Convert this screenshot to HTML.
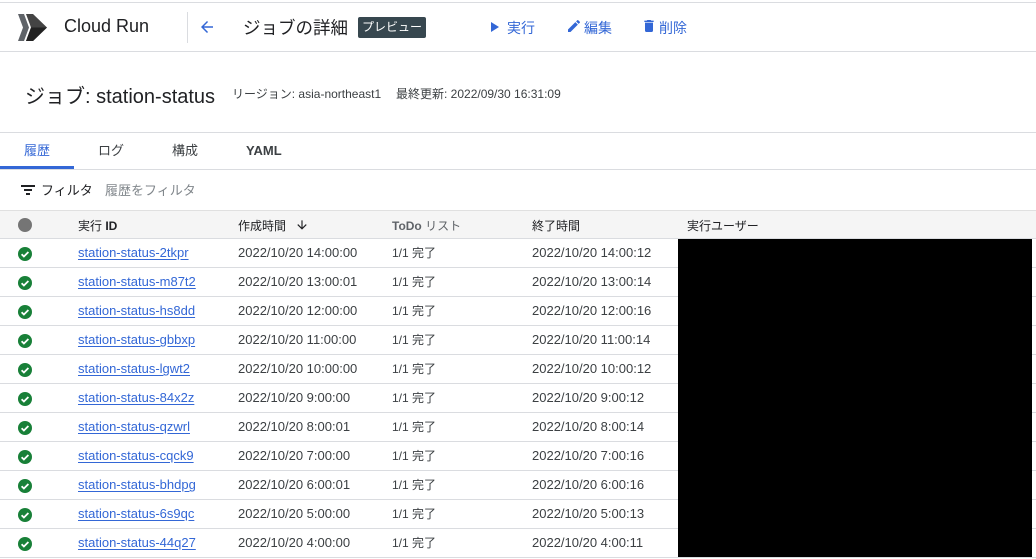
<!DOCTYPE html>
<html><head><meta charset="utf-8"><style>
*{margin:0;padding:0;box-sizing:border-box}
body{width:1036px;height:559px;overflow:hidden;background:#fff;font-family:"Liberation Sans","Noto Sans CJK JP",sans-serif;color:#202124;position:relative}
.a{position:absolute;white-space:nowrap}
.hl{position:absolute;left:0;width:1036px;height:1px;background:#dadce0}
.blue{color:#3367d6}
.row{position:absolute;left:0;width:1036px;height:29px;border-bottom:1px solid #dadce0;font-size:13px;color:#3c4043}
.row span{position:absolute;top:0;line-height:28px}
.lk{color:#3367d6;text-decoration:underline;text-underline-offset:2px}
</style></head><body>
<div class="hl" style="top:2px"></div>
<svg class="a" style="left:17px;top:13px" width="30" height="30" viewBox="0 0 30 30">
<polygon points="1,1 7,1 12,14.5 7,28 1,28 6,14.5" fill="#5f6368"/>
<polygon points="9,1 16,1 30,14.5 16,28 9,28 14,14.5" fill="#444"/>
<polygon points="14,14.5 30,14.5 16,28 9,28" fill="#222"/>
</svg>
<div class="a" style="left:64px;top:16px;font-size:18px;color:#202124">Cloud Run</div>
<div class="a" style="left:187px;top:12px;width:1px;height:31px;background:#dadce0"></div>
<svg class="a" style="left:198px;top:18px" width="18" height="18" viewBox="0 0 24 24"><path d="M20 11H7.8l5.6-5.6L12 4l-8 8 8 8 1.4-1.4L7.8 13H20z" fill="#3367d6"/></svg>
<div class="a" style="left:243px;top:15px;font-size:17.5px;color:#202124">ジョブの詳細</div>
<div class="a" style="left:358px;top:17px;width:68px;height:21px;background:#37474f;border-radius:2px;color:#fff;font-size:12px;line-height:21px;text-align:center">プレビュー</div>
<svg class="a" style="left:490px;top:21px" width="10" height="12" viewBox="0 0 10 12"><polygon points="1,1 9,6 1,11" fill="#3367d6"/></svg>
<div class="a blue" style="left:507px;top:18px;font-size:14px">実行</div>
<svg class="a" style="left:566px;top:18px" width="16" height="16" viewBox="0 0 24 24"><path d="M3 17.25V21h3.75L17.8 9.94l-3.750-3.75L3 17.25zM20.7 7.04a1 1 0 000-1.41l-2.34-2.34a1 1 0 00-1.41 0l-1.83 1.83 3.75 3.75 1.83-1.83z" fill="#3367d6"/></svg>
<div class="a blue" style="left:584px;top:18px;font-size:14px">編集</div>
<svg class="a" style="left:641px;top:17px" width="16" height="18" viewBox="0 0 24 24"><path d="M6 19c0 1.1.9 2 2 2h8c1.1 0 2-.9 2-2V7H6v12zM19 4h-3.5l-1-1h-5l-1 1H5v2h14V4z" fill="#3367d6"/></svg>
<div class="a blue" style="left:659px;top:18px;font-size:14px">削除</div>
<div class="hl" style="top:51px"></div>
<div class="a" style="left:25px;top:80px;font-size:20px;color:#202124">ジョブ: station-status</div>
<div class="a" style="left:232px;top:85px;font-size:12px;color:#3c4043">リージョン: asia-northeast1</div>
<div class="a" style="left:396px;top:85px;font-size:12px;color:#3c4043">最終更新: 2022/09/30 16:31:09</div>
<div class="hl" style="top:132px"></div>
<div class="a blue" style="left:24px;top:140px;font-size:13px">履歴</div>
<div class="a" style="left:98px;top:140px;font-size:13px;color:#3c4043">ログ</div>
<div class="a" style="left:172px;top:140px;font-size:13px;color:#3c4043">構成</div>
<div class="a" style="left:246px;top:143px;font-size:13px;color:#3c4043;font-weight:bold">YAML</div>
<div class="a" style="left:0;top:166px;width:74px;height:3px;background:#3367d6"></div>
<div class="hl" style="top:169px"></div>
<svg class="a" style="left:21px;top:183px" width="14" height="12" viewBox="0 0 14 12"><rect x="0" y="2" width="14" height="2" fill="#202124"/><rect x="3" y="6" width="8" height="2" fill="#202124"/><rect x="5" y="10" width="4" height="2" fill="#202124"/></svg>
<div class="a" style="left:41px;top:180px;font-size:13px;color:#202124">フィルタ</div>
<div class="a" style="left:105px;top:180px;font-size:13px;color:#80868b">履歴をフィルタ</div>
<div class="a" style="left:0;top:210px;width:1036px;height:29px;background:#f5f5f5;border-top:1px solid #e0e0e0;border-bottom:1px solid #dadce0"></div>
<div class="a" style="left:18px;top:218px;width:14px;height:14px;border-radius:50%;background:#757575"></div>
<div class="a" style="left:78px;top:217px;font-size:12px;color:#202124">実行 <b>ID</b></div>
<div class="a" style="left:238px;top:217px;font-size:12px;color:#202124">作成時間</div>
<svg class="a" style="left:295px;top:218px" width="14" height="14" viewBox="0 0 24 24"><path d="M20 12l-1.41-1.410L13 16.17V4h-2v12.17l-5.58-5.59L4 12l8 8 8-8z" fill="#202124"/></svg>
<div class="a" style="left:392px;top:217px;font-size:12px;color:#5f6368"><b>ToDo</b> リスト</div>
<div class="a" style="left:532px;top:217px;font-size:12px;color:#202124">終了時間</div>
<div class="a" style="left:687px;top:217px;font-size:12px;color:#202124">実行ユーザー</div>
<div id="rows"></div>
<script>
var d=[["2tkpr","14:00:00","14:00:12"],["m87t2","13:00:01","13:00:14"],["hs8dd","12:00:00","12:00:16"],["gbbxp","11:00:00","11:00:14"],["lgwt2","10:00:00","10:00:12"],["84x2z","9:00:00","9:00:12"],["qzwrl","8:00:01","8:00:14"],["cqck9","7:00:00","7:00:16"],["bhdpg","6:00:01","6:00:16"],["6s9qc","5:00:00","5:00:13"],["44q27","4:00:00","4:00:11"]];
var h="";
d.forEach(function(r,i){var t=239+i*29;
h+='<div class="row" style="top:'+t+'px"><svg style="position:absolute;left:18px;top:8px" width="14" height="14" viewBox="0 0 14 14"><circle cx="7" cy="7" r="7" fill="#188038"/><path d="M3.6 7.2l2.3 2.3 4.5-4.5" stroke="#fff" stroke-width="1.8" fill="none"/></svg><span class="lk" style="left:78px">station-status-'+r[0]+'</span><span style="left:238px">2022/10/20 '+r[1]+'</span><span style="left:392px;font-size:12px">1/1 完了</span><span style="left:532px">2022/10/20 '+r[2]+'</span></div>';});
document.getElementById("rows").innerHTML=h;
</script>
<div class="a" style="left:678px;top:239px;width:354px;height:318px;background:#000"></div>
</body></html>
